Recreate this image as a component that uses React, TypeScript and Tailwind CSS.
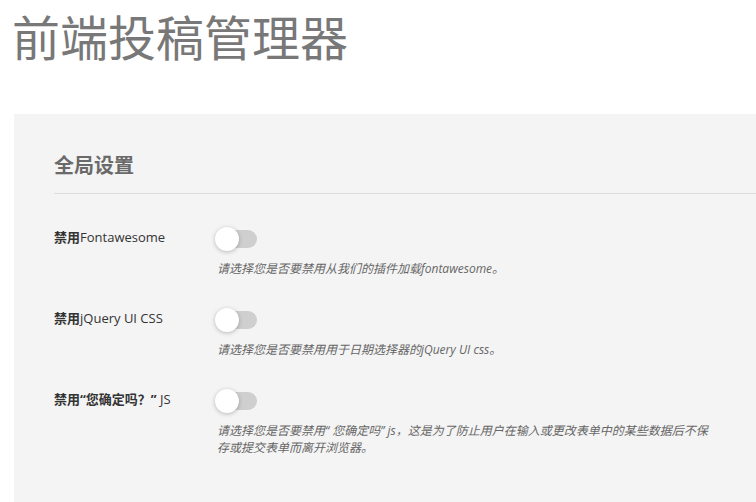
import React from 'react';

const settings = [
    { strong: '禁用', rest: 'Fontawesome', desc: '请选择您是否要禁用从我们的插件加载fontawesome。' },
    { strong: '禁用', rest: 'jQuery UI CSS', desc: '请选择您是否要禁用用于日期选择器的jQuery UI css。' },
    { strong: '禁用“您确定吗？”', rest: ' JS', desc: '请选择您是否要禁用“ 您确定吗” js，这是为了防止用户在输入或更改表单中的某些数据后不保存或提交表单而离开浏览器。' },
];

const Toggle = () => (
    <div className="relative w-[42px] h-[24px]">
        <div className="absolute left-[7px] top-[3px] w-[35px] h-[18px] rounded-full bg-[#cfcfcf]" />
        <div className="absolute left-0 top-0 size-[24px] rounded-full bg-white shadow-[0_1px_4px_rgba(0,0,0,0.25)]" />
    </div>
);

export default function App() {
    return (
        <div className="w-[756px] h-[502px] overflow-hidden bg-white" style={{ fontFamily: '"Open Sans", "Noto Sans CJK SC", sans-serif' }}>
            <h1 className="pl-[12px] pt-[8px] text-[48px] leading-[60px] font-normal text-[#787878]">前端投稿管理器</h1>
            <div className="ml-[14px] mt-[46px] bg-[#f4f4f4] h-[400px] pl-[40px] pt-[38px]">
                <h2 className="text-[20px] leading-[28px] font-bold text-[#6a6a6a]">全局设置</h2>
                <div className="mt-[13px] border-t border-[#dcdcdc]" />
                <div className="pt-[33px] flex flex-col gap-[31px]">
                    {settings.map(s => (
                        <div key={s.rest} className="flex">
                            <div className="w-[161px] shrink-0 text-[13px] leading-[21px] text-[#333]">
                                <span className="font-bold">{s.strong}</span>
                                <span className="font-medium">{s.rest}</span>
                            </div>
                            <div>
                                <Toggle />
                                <p className="mt-[9px] max-w-[496px] text-[12px] leading-[17px] italic text-[#666] pl-[2px]">{s.desc}</p>
                            </div>
                        </div>
                    ))}
                </div>
            </div>
        </div>
    );
}
